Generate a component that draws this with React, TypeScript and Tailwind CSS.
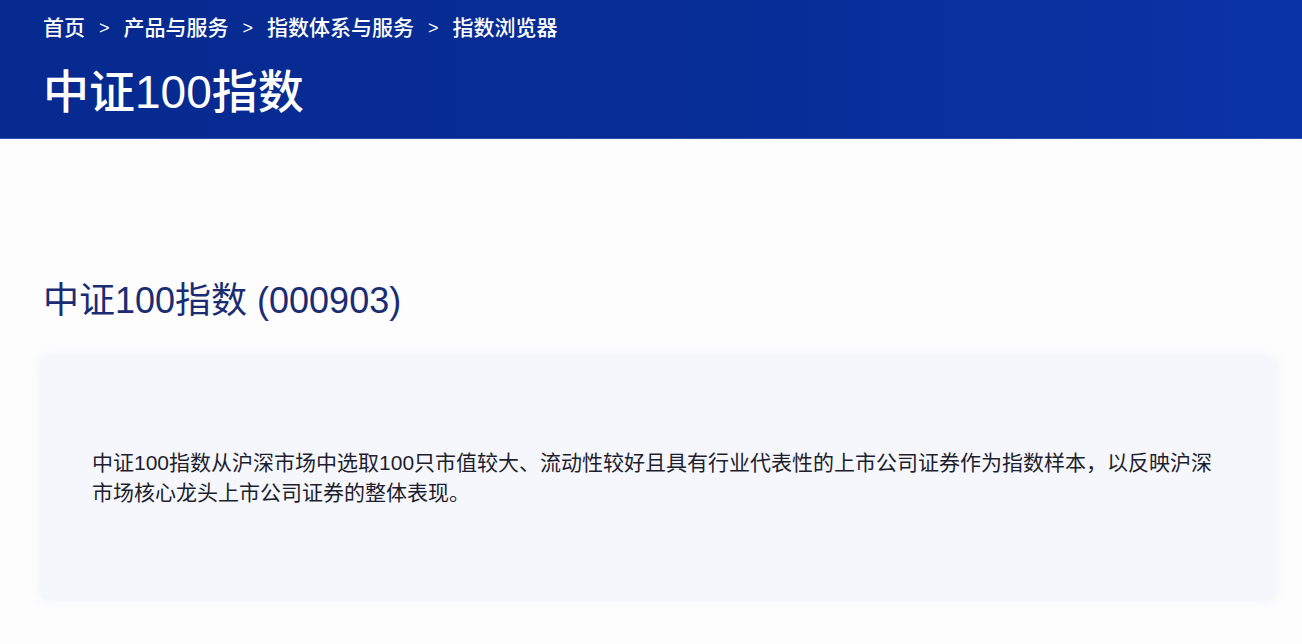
import React from 'react'

const crumbs = ['首页', '产品与服务', '指数体系与服务', '指数浏览器']

export default function App() {
  return (
    <div
      className="min-h-[644px] w-full bg-[#fdfdfe]"
      style={{ fontFamily: '"Liberation Sans", "Noto Sans CJK SC", sans-serif' }}
    >
      {/* Banner */}
      <header className="h-[139px] border-b border-[#2a4db0] bg-gradient-to-r from-[#062a8f] via-[#072c95] to-[#0a33a6] px-[43px] pt-[14px]">
        <nav className="flex items-center text-[21px] font-medium leading-[28px] text-white">
          {crumbs.map((c, i) => (
            <React.Fragment key={c}>
              {i > 0 && <span className="mx-[14px] text-[18px]">&gt;</span>}
              <span>{c}</span>
            </React.Fragment>
          ))}
        </nav>
        <h1 className="mt-[22px] text-[46px] font-medium leading-[56px] text-white">中证100指数</h1>
      </header>

      {/* Index overview */}
      <main className="px-[42px] pb-[46px] pt-[138px]">
        <h2 className="ml-[1px] text-[36px] font-normal leading-[48px] text-[#1b2d72]">中证100指数 (000903)</h2>
        <section className="mr-[-15px] mt-[33px] flex h-[240px] items-center rounded-sm bg-[#f5f7fc] pl-[50px] pr-[60px] shadow-[0_0_12px_rgba(225,230,242,0.6)]">
          <p className="text-[21px] leading-[30px] text-[#1e1e2e]">
            中证100指数从沪深市场中选取100只市值较大、流动性较好且具有行业代表性的上市公司证券作为指数样本，以反映沪深市场核心龙头上市公司证券的整体表现。
          </p>
        </section>
      </main>
    </div>
  )
}
